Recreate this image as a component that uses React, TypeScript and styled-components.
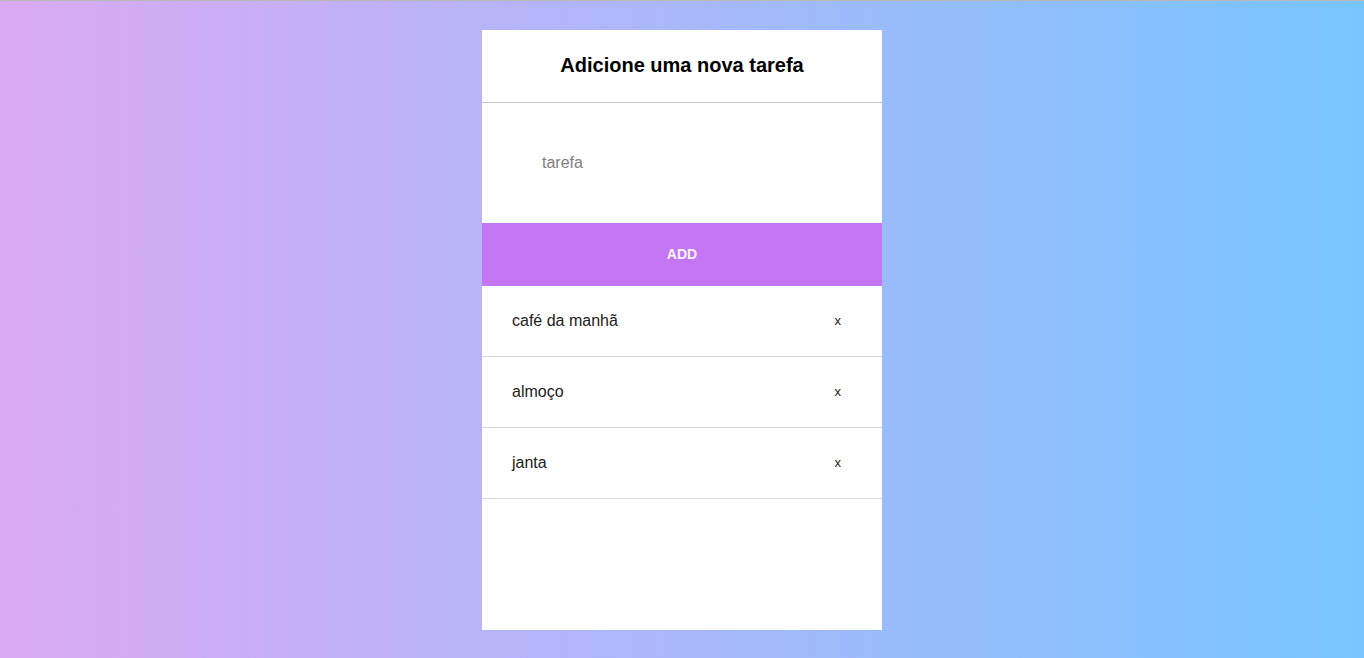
import React, { useState } from 'react';
import styled, { createGlobalStyle } from 'styled-components';

const GlobalStyle = createGlobalStyle`
  * {
    box-sizing: border-box;
  }
  html, body {
    margin: 0;
    padding: 0;
  }
  body {
    font-family: 'Liberation Sans', Arial, sans-serif;
  }
`;

const Page = styled.div`
  min-height: 658px;
  border-top: 1px solid #b9b9b9;
  background: linear-gradient(to right, #dba9f4, #a9b8f9 50%, #77c5ff);
  display: flex;
  justify-content: center;
  padding-top: 29px;
`;

const Card = styled.div`
  width: 400px;
  height: 600px;
  background: #fff;
  display: flex;
  flex-direction: column;
`;

const Header = styled.h1`
  margin: 0;
  height: 73px;
  border-bottom: 1px solid #c8c8c8;
  display: flex;
  align-items: center;
  justify-content: center;
  font-size: 20px;
  font-weight: bold;
  color: #000;
  padding-bottom: 2px;
`;

const TaskInput = styled.input`
  height: 120px;
  width: 100%;
  border: none;
  outline: none;
  padding: 0 0 0 60px;
  font-family: 'Liberation Sans', Arial, sans-serif;
  font-size: 16px;
  color: #333;

  &::placeholder {
    color: #808080;
  }
`;

const AddButton = styled.button`
  height: 63px;
  width: 100%;
  border: none;
  padding: 0 0 2px;
  background: #c476f5;
  color: #fbf4ff;
  font-family: 'Liberation Sans', Arial, sans-serif;
  font-size: 14px;
  font-weight: bold;
  cursor: pointer;
`;

const List = styled.ul`
  list-style: none;
  margin: 0;
  padding: 0;
`;

const Item = styled.li`
  height: 71px;
  border-bottom: 1px solid #d9d9d9;
  display: flex;
  align-items: center;
  padding: 0 41px 0 30px;
  font-size: 16px;
  color: #222;
`;

const Remove = styled.button`
  margin-left: auto;
  border: none;
  background: none;
  padding: 0 0 2px;
  font-family: 'Liberation Sans', Arial, sans-serif;
  font-size: 13px;
  color: #222;
  cursor: pointer;
`;

export default function App() {
  const [tasks, setTasks] = useState(['café da manhã', 'almoço', 'janta']);
  const [text, setText] = useState('');

  const add = () => {
    if (!text.trim()) return;
    setTasks([...tasks, text.trim()]);
    setText('');
  };

  return (
    <>
      <GlobalStyle />
      <Page>
        <Card>
          <Header>Adicione uma nova tarefa</Header>
          <TaskInput
            placeholder="tarefa"
            value={text}
            onChange={(e) => setText(e.target.value)}
          />
          <AddButton onClick={add}>ADD</AddButton>
          <List>
            {tasks.map((t, i) => (
              <Item key={i}>
                {t}
                <Remove onClick={() => setTasks(tasks.filter((_, j) => j !== i))}>x</Remove>
              </Item>
            ))}
          </List>
        </Card>
      </Page>
    </>
  );
}
